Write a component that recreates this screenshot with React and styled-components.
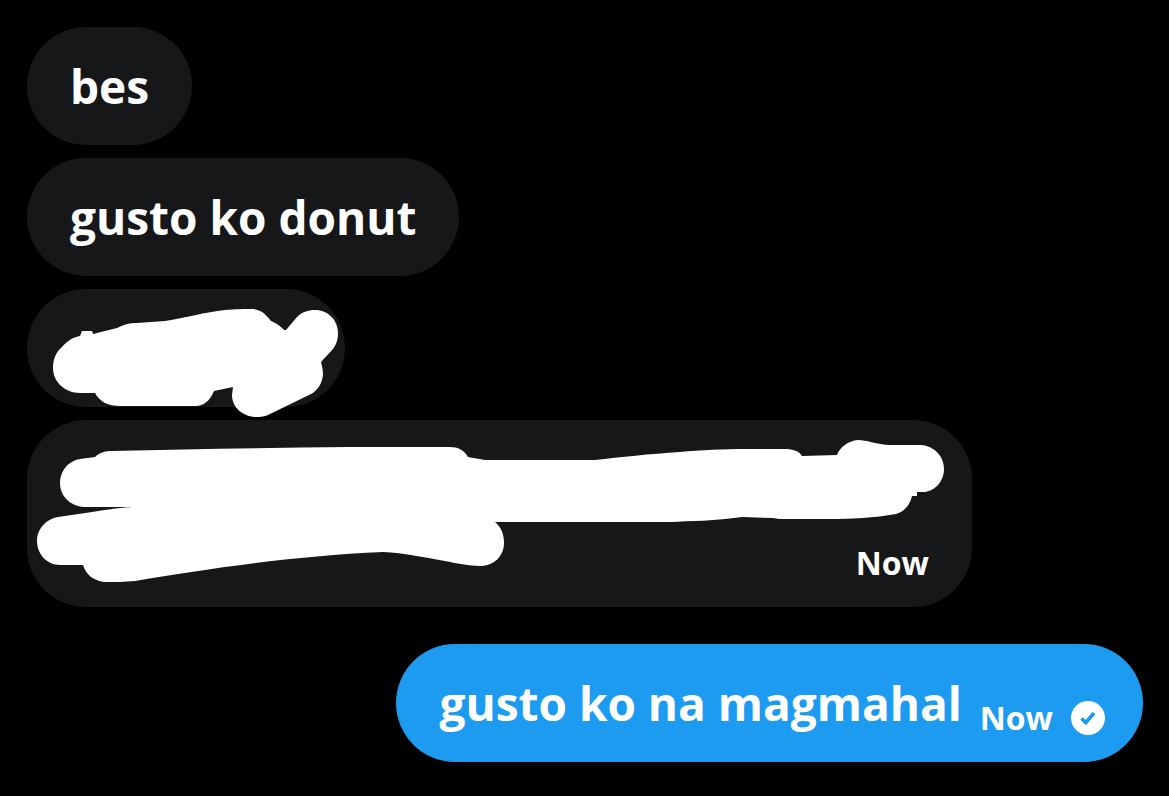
import React from "react";
import styled, { createGlobalStyle } from "styled-components";

const GlobalStyle = createGlobalStyle`
  * { box-sizing: border-box; }
  body {
    margin: 0;
    background: #000;
    color: #fff;
    font-family: "Open Sans", "Noto Sans", sans-serif;
  }
`;

const Conversation = styled.main`
  display: flex;
  flex-direction: column;
  padding: 27px 26px 34px 27px;
`;

const Thread = styled.section`
  display: flex;
  flex-direction: column;
  align-items: ${(p) => (p.$sent ? "flex-end" : "flex-start")};
  gap: 13px;
  margin-top: ${(p) => (p.$sent ? "37px" : "0")};
`;

const Bubble = styled.article`
  display: flex;
  flex-direction: ${(p) => (p.$stacked ? "column" : "row")};
  align-items: flex-end;
  max-width: 100%;
  padding: 27px ${(p) => (p.$sent ? "38px" : "43px")} 27px 43px;
  border-radius: 59px;
  background: ${(p) => (p.$sent ? "#1d9bf0" : "#161719")};
`;

const Message = styled.p`
  margin: 0;
  font-size: 46px;
  font-weight: 700;
  line-height: 64px;
`;

const Meta = styled.footer`
  display: flex;
  align-items: center;
  gap: 18px;
  margin-left: 18px;
`;

const Time = styled.time`
  font-size: 32px;
  font-weight: 700;
  line-height: 34px;
`;

const Scribble = styled.svg`
  display: block;
  overflow: visible;
  max-width: 100%;
  fill: #fff;
`;

const Badge = styled.svg`
  display: block;
  width: 34px;
  height: 34px;
`;

export default function App() {
  return (
    <>
      <GlobalStyle />
      <Conversation>
        <Thread>
          <Bubble>
            <Message>bes</Message>
          </Bubble>
          <Bubble>
            <Message>gusto ko donut</Message>
          </Bubble>
          <Bubble>
            <Scribble width="232" height="64" viewBox="70 316 232 64" role="img" aria-label="Hidden message">
              <path d="M53 368C53 358 57 351 62 347C68 340 74 337 80 336L82 331H92L93 334L117 328C125 324 130 323 137 323L165 321C185 318 205 312 225 310C235 309 245 309 251 309C260 309 265 313 271 321C277 323 282 328 284 330H286L297 317C302 312 308 310 315 310C328 310 338 320 338 333C338 340 336 345 333 349L321 362C322 366 323 370 323 375C322 384 317 391 311 394L268 415C262 417 260 417 255 417C242 416 232 407 232 395L233 387L214 391C210 401 203 406 196 406H120C108 406 100 402 95 393H80C65 393 53 382 53 368Z" />
            </Scribble>
          </Bubble>
          <Bubble $stacked>
            <Scribble width="859" height="99" viewBox="70 447 859 99" role="img" aria-label="Hidden message">
              <path d="M60 483C60 471 68 461 80 459L95 457C100 452 106 451 112 451C190 449 270 448 350 447H450C458 447 464 450 468 457L485 460H595C620 457 650 454 680 452C700 450 725 449 745 449H785C793 449 799 451 802 456L837 455C840 447 848 441 858 440C867 440 875 444 888 445H921C934 446 944 456 944 469C944 482 934 492 923 492H917V496H912C910 505 904 512 896 514C875 518 850 519 830 519H780C777 519 775 518 773 518L742 517C715 521 690 521 670 522H495C501 527 504 534 504 543C504 556 494 566 480 566C470 566 455 563 445 561C422 557 405 553 383 552C290 556 200 570 135 581C125 582 115 582 105 582C94 581 86 575 83 565H60C47 565 37 554 37 541C37 529 46 519 58 517C82 514 105 509 132 507H84C70 506 60 496 60 483Z" />
            </Scribble>
            <Meta>
              <Time>Now</Time>
            </Meta>
          </Bubble>
        </Thread>
        <Thread $sent>
          <Bubble $sent>
            <Message>gusto ko na magmahal</Message>
            <Meta>
              <Time>Now</Time>
              <Badge viewBox="0 0 34 34" role="img" aria-label="Sent">
                <circle cx="17" cy="17" r="17" fill="#fff" />
                <path d="M10.5 17.5L14.8 21.6L23 12" fill="none" stroke="#1d9bf0" strokeWidth="3.6" />
              </Badge>
            </Meta>
          </Bubble>
        </Thread>
      </Conversation>
    </>
  );
}
